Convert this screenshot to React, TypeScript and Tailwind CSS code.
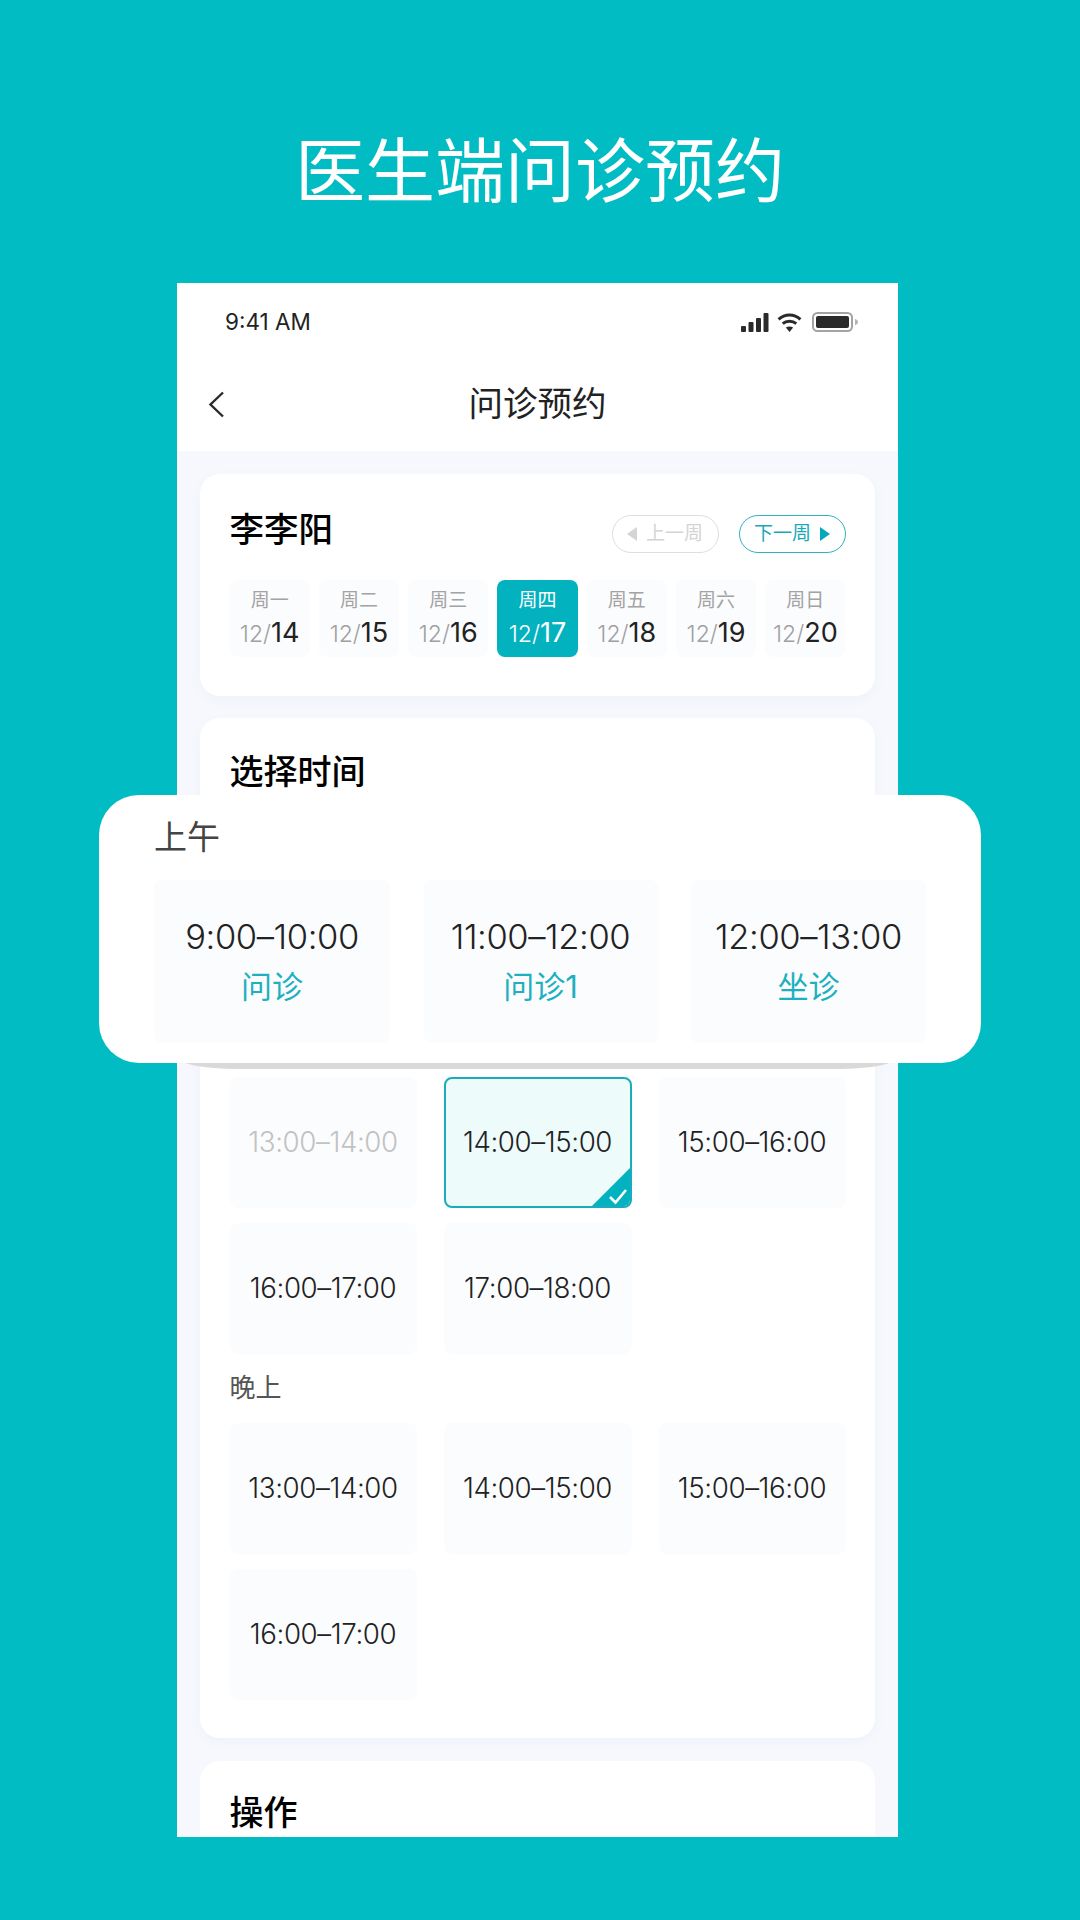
import React from "react";

const days = [
  ["周一", "14"],
  ["周二", "15"],
  ["周三", "16"],
  ["周四", "17"],
  ["周五", "18"],
  ["周六", "19"],
  ["周日", "20"],
];

function Slot({ text, state }: { text?: string; state?: "disabled" | "selected" }) {
  if (!text) return <div />;
  if (state === "selected") {
    return (
      <div className="relative h-[131px] rounded-[8px] border-2 border-[#19acba] bg-[#edfbfb] overflow-hidden flex items-center justify-center text-[27.7px] font-light text-[#222222] tracking-[-0.4px]">
        {text}
        <svg className="absolute right-[-2px] bottom-[-2px]" width="42" height="42" viewBox="0 0 42 42">
          <polygon points="42,0 42,42 0,42" fill="#03b2bf" />
          <path d="M20 31 L25.5 36.5 L36 24" fill="none" stroke="#ffffff" strokeWidth="2.6" />
        </svg>
      </div>
    );
  }
  return (
    <div
      className={
        "h-[131px] rounded-[8px] bg-[#fbfcfe] flex items-center justify-center text-[27.7px] font-light tracking-[-0.4px] " +
        (state === "disabled" ? "text-[#c2c2c2]" : "text-[#222222]")
      }
    >
      {text}
    </div>
  );
}

function Popout() {
  const items = [
    ["9:00–10:00", "问诊"],
    ["11:00–12:00", "问诊1"],
    ["12:00–13:00", "坐诊"],
  ];
  return (
    <>
      <div className="absolute left-[177px] top-[1040px] w-[721px] h-[29px] rounded-b-[60px_12px] bg-[#d9d9d9]" />
      <div className="absolute left-[99px] top-[795px] w-[882px] h-[268px] rounded-[40px] bg-white pl-[55px] pt-[22px]">
        <div className="text-[33px] leading-[40px] text-[#444444]">上午</div>
        <div className="mt-[23px] grid grid-cols-[236px_234px_235px] gap-x-[33.5px]">
          {items.map(([time, type]) => (
            <div key={time} className="h-[163px] rounded-[8px] bg-[#fbfcfe] flex flex-col items-center pt-[37px]">
              <div className="text-[34.5px] leading-[40px] font-light text-[#222222] tracking-[-0.4px]">{time}</div>
              <div className="mt-[10px] text-[31px] leading-[40px] text-[#1fb0c0]">{type}</div>
            </div>
          ))}
        </div>
      </div>
    </>
  );
}

export default function App() {
  return (
    <div className="relative h-[1920px] w-[1080px] overflow-hidden bg-[#02bcc4] flex flex-col font-['Inter','Noto_Sans_CJK_SC',sans-serif]">
      <div className="h-[283px] pt-[137px] text-center text-[70px] leading-[70px] font-normal text-white">医生端问诊预约</div>

      <div className="ml-[177px] w-[721px] h-[1554px] overflow-hidden bg-[#f6f8fd] flex flex-col">
        <div className="bg-white h-[168px] shrink-0">
          <div className="h-[78px] flex items-center justify-between pl-[48px] pr-[39px]">
            <div className="text-[22.5px] font-normal text-[#222222]">9:41 AM</div>
            <div className="flex items-center gap-[8px]">
              <svg width="28" height="19" viewBox="0 0 28 19" fill="#2a2a2a">
                <rect x="0" y="13" width="5" height="6" rx="1" />
                <rect x="7.5" y="9" width="5" height="10" rx="1" />
                <rect x="15" y="5" width="5" height="14" rx="1" />
                <rect x="22.5" y="0" width="5" height="19" rx="1" />
              </svg>
              <svg width="25" height="19" viewBox="0 0 24 18" fill="none" stroke="#2a2a2a" strokeWidth="2.8">
                <path d="M1.5 6 C7.5 0.5 16.5 0.5 22.5 6" />
                <path d="M5.5 10 C9 7 15 7 18.5 10" />
                <path d="M12 18 L8.5 13.8 C10.5 12.4 13.5 12.4 15.5 13.8 Z" fill="#2a2a2a" stroke="none" />
              </svg>
              <svg className="ml-[2px]" width="47" height="20" viewBox="0 0 47 20" fill="none">
                <rect x="1" y="1" width="39" height="18" rx="4.5" stroke="#a3a3a3" strokeWidth="2" />
                <rect x="4" y="4" width="33" height="12" rx="2" fill="#2a2a2a" />
                <path d="M43 7 C45 7.5 46 8.5 46 10 C46 11.5 45 12.5 43 13 Z" fill="#b5b5b5" />
              </svg>
            </div>
          </div>
          <div className="relative h-[86px] flex items-center justify-center">
            <svg className="absolute left-[31px] top-[30px]" width="17" height="27" viewBox="0 0 17 27" fill="none" stroke="#2a2a2a" strokeWidth="2.4">
              <path d="M15 1.5 L2.5 13.5 L15 25.5" />
            </svg>
            <div className="text-[34.5px] font-normal text-[#222222]">问诊预约</div>
          </div>
        </div>

        <div className="px-[23px] pt-[23px] flex flex-col gap-[22px]">
          <div className="h-[222px] shrink-0 rounded-[20px] bg-white px-[29.5px] pt-[33px] shadow-[0_4px_12px_rgba(120,140,200,0.05)]">
            <div className="flex justify-between items-start">
              <div className="text-[34.5px] leading-[46px] font-medium text-black">李李阳</div>
              <div className="flex gap-[20px] mt-[8px]">
                <div className="w-[107px] h-[38px] rounded-full border-[1.5px] border-[#dedede] flex items-center justify-center gap-[9px] text-[19px] text-[#d4d4d4]">
                  <svg width="10" height="14" viewBox="0 0 10 14">
                    <polygon points="10,0 10,14 0,7" fill="#d4d4d4" />
                  </svg>
                  <span>上一周</span>
                </div>
                <div className="w-[107px] h-[38px] rounded-full border-[1.5px] border-[#2fb2c0] flex items-center justify-center gap-[9px] text-[19px] text-[#18a8b6]">
                  <span>下一周</span>
                  <svg width="10" height="14" viewBox="0 0 10 14">
                    <polygon points="0,0 10,7 0,14" fill="#03a9b8" />
                  </svg>
                </div>
              </div>
            </div>
            <div className="mt-[27px] grid grid-cols-7 gap-x-[9px]">
              {days.map(([w, d]) => {
                const on = d === "17";
                return (
                  <div
                    key={d}
                    className={
                      "h-[77px] rounded-[8px] flex flex-col items-center pt-[9px] " +
                      (on ? "bg-[#03b2bf]" : "bg-[#fbfcfe]")
                    }
                  >
                    <div className={"text-[19px] leading-[24px] " + (on ? "text-white" : "text-[#a3a3a3]")}>{w}</div>
                    <div className="mt-[4px] leading-[32px] whitespace-nowrap">
                      <span className={"text-[23px] font-light " + (on ? "text-white" : "text-[#a0a0a0]")}>12/</span>
                      <span className={"text-[27px] font-normal " + (on ? "text-white" : "text-[#222222]")}>{d}</span>
                    </div>
                  </div>
                );
              })}
            </div>
          </div>

          <div className="h-[1020px] shrink-0 rounded-[20px] bg-white px-[29.5px] pt-[32px] shadow-[0_4px_12px_rgba(120,140,200,0.05)]">
            <div className="text-[34px] leading-[44px] font-medium text-black">选择时间</div>
            <div className="mt-[283px] grid grid-cols-[187px_188px_187px] gap-x-[27px] gap-y-[15px]">
              <Slot text="13:00–14:00" state="disabled" />
              <Slot text="14:00–15:00" state="selected" />
              <Slot text="15:00–16:00" />
              <Slot text="16:00–17:00" />
              <Slot text="17:00–18:00" />
            </div>
            <div className="mt-[17px] text-[26px] leading-[34px] text-[#555555]">晚上</div>
            <div className="mt-[18px] grid grid-cols-[187px_188px_187px] gap-x-[27px] gap-y-[15px]">
              <Slot text="13:00–14:00" />
              <Slot text="14:00–15:00" />
              <Slot text="15:00–16:00" />
              <Slot text="16:00–17:00" />
            </div>
          </div>

          <div className="h-[120px] shrink-0 mt-[1px] rounded-[20px] bg-white px-[29.5px] pt-[30px]">
            <div className="text-[34px] leading-[44px] font-medium text-black">操作</div>
          </div>
        </div>
      </div>

      <Popout />
    </div>
  );
}
